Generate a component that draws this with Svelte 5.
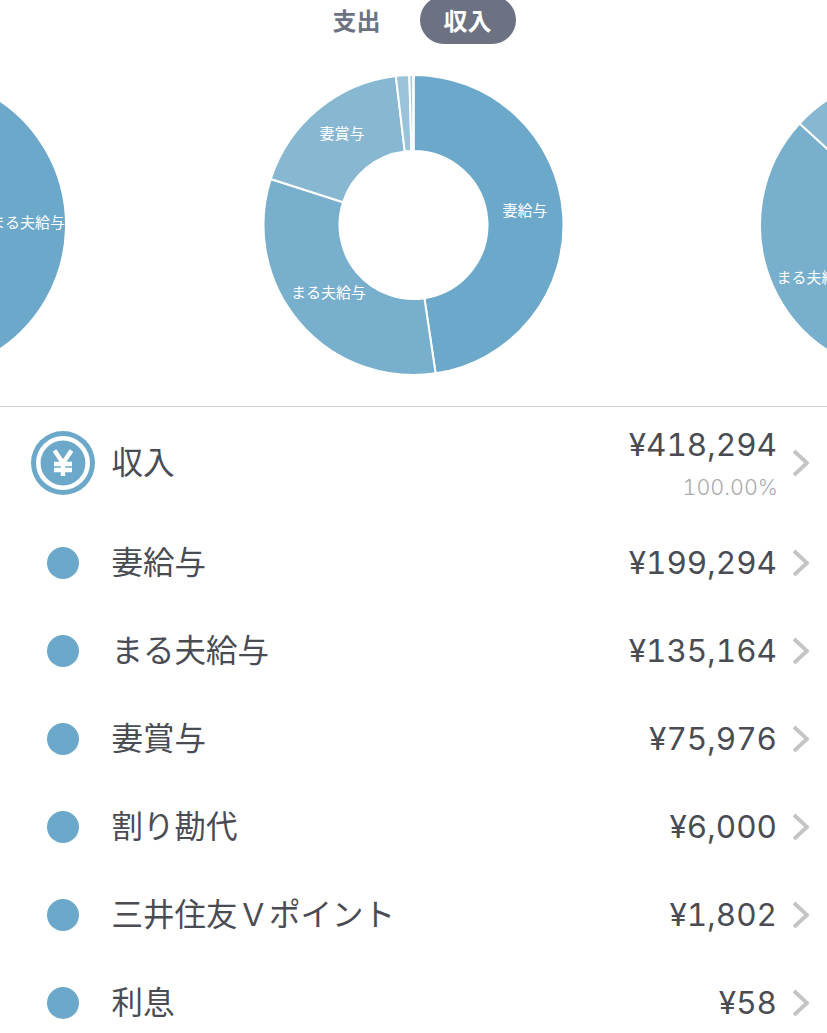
<script>
  const R = 150, r = 74;
  const pt = (cx, cy, rad, deg) => {
    const a = (deg * Math.PI) / 180;
    return [cx + rad * Math.sin(a), cy - rad * Math.cos(a)];
  };
  function arc(cx, cy, from, to) {
    const large = to - from > 180 ? 1 : 0;
    const [a, b] = pt(cx, cy, R, from);
    const [c, d] = pt(cx, cy, R, to);
    const [e, f] = pt(cx, cy, r, to);
    const [g, h] = pt(cx, cy, r, from);
    return `M${a} ${b}A${R} ${R} 0 ${large} 1 ${c} ${d}L${e} ${f}A${r} ${r} 0 ${large} 0 ${g} ${h}Z`;
  }
  const total = 418294;
  const colors = ['#6ba8c9', '#78afcd', '#87b7d1', '#9ac3d9', '#a8cbde', '#b5d3e3'];
  const amounts = [199294, 135164, 75976, 6000, 1802, 58];
  let acc = 0;
  const slices = amounts.map((v, i) => {
    const from = (acc / total) * 360;
    acc += v;
    return { d: arc(413.5, 225, from, (acc / total) * 360), color: colors[i] };
  });
  const rows = [
    { name: '妻給与', amount: '¥199,294' },
    { name: 'まる夫給与', amount: '¥135,164' },
    { name: '妻賞与', amount: '¥75,976' },
    { name: '割り勘代', amount: '¥6,000' },
    { name: '三井住友Ｖポイント', amount: '¥1,802' },
    { name: '利息', amount: '¥58' }
  ];
  const leftMain = arc(-84, 225, 0, 359.99);
  const rightMain = arc(910, 225, 180, 312.6);
  const rightTop = arc(910, 225, 312.6, 359.9);
</script>

<div class="page">
  <div class="tabs">
    <span class="tab">支出</span>
    <span class="tab active">収入</span>
  </div>

  <svg class="charts" width="827" height="362" viewBox="0 44 827 362">
    <g class="slices">
      <path d={leftMain} fill="#6ba8c9" />
      {#each slices as s}
        <path d={s.d} fill={s.color} />
      {/each}
      <path d={rightMain} fill="#78afcd" />
      <path d={rightTop} fill="#87b7d1" />
    </g>
    <text x="65" y="228" text-anchor="end">まる夫給与</text>
    <text x="525" y="216" text-anchor="middle">妻給与</text>
    <text x="342" y="139" text-anchor="middle">妻賞与</text>
    <text x="328.500" y="298" text-anchor="middle">まる夫給与</text>
    <text x="776.500" y="283">まる夫給与</text>
  </svg>

  <div class="list">
    <div class="row head">
      <svg class="coin" width="64" height="64" viewBox="0 0 64 64">
        <circle cx="32" cy="32" r="32" fill="#6ba8c9" />
        <circle cx="32" cy="32" r="24.7" fill="#6ba8c9" stroke="#fff" stroke-width="4.6" />
        <path d="M23.500 19.500 32 32l8.500-12.500M32 32v13M23 33h18M23 39h18" fill="none" stroke="#fff" stroke-width="4.400" />
      </svg>
      <span class="name">収入</span>
      <span class="values head-values">
        <span class="amount">¥418,294</span>
        <span class="pct">100.00%</span>
      </span>
      <svg class="chev" width="17" height="28" viewBox="0 0 17 28"><path d="M2 2l13 12L2 26" fill="none" stroke="#c4c4c6" stroke-width="3.800" /></svg>
    </div>
    {#each rows as row}
      <div class="row">
        <span class="dot-wrap"><span class="dot"></span></span>
        <span class="name">{row.name}</span>
        <span class="values"><span class="amount">{row.amount}</span></span>
        <svg class="chev" width="17" height="28" viewBox="0 0 17 28"><path d="M2 2l13 12L2 26" fill="none" stroke="#c4c4c6" stroke-width="3.800" /></svg>
      </div>
    {/each}
  </div>
</div>

<style>
  :global(body) { margin: 0; background: #fff; }
  .page {
    width: 827px;
    height: 1033px;
    overflow: hidden;
    background: #fff;
    font-family: "Noto Sans CJK JP", "Noto Sans", sans-serif;
    color: #4a4c54;
  }
  .tabs {
    height: 44px;
    display: flex;
    justify-content: center;
    align-items: flex-end;
    gap: 39px;
    overflow: hidden;
    padding-left: 21px;
    box-sizing: border-box;
  }
  .tab {
    height: 48px;
    line-height: 48px;
    flex: none;
    font-size: 24px;
    font-weight: 700;
    color: #6d7283;
  }
  .active {
    width: 96px;
    text-align: center;
    color: #fff;
    background: #6d7283;
    border-radius: 24px;
  }
  .charts { display: block; }
  .slices path { stroke: #fff; stroke-width: 2; }
  .charts text { font-size: 15px; fill: #fff; }
  .list { border-top: 1px solid #cfcfcf; }
  .row {
    height: 88px;
    display: flex;
    align-items: center;
    padding: 0 18px 0 31px;
  }
  .head { height: 112px; }
  .coin { flex: none; }
  .dot-wrap { width: 64px; display: flex; justify-content: center; flex: none; }
  .dot { width: 32px; height: 32px; border-radius: 50%; background: #6ba8c9; }
  .name { margin-left: 16.500px; font-size: 31.500px; flex: 1; padding-bottom: 6px; }
  .values {
    display: flex;
    flex-direction: column;
    align-items: flex-end;
    font-family: Inter, "Noto Sans", sans-serif;
    font-variant-numeric: tabular-nums;
  }
  .head-values { padding-top: 4px; }
  .amount { font-size: 31.500px; line-height: 40px; }
  .pct { font-size: 21.500px; line-height: 38px; color: #a9abb0; font-weight: 300; margin-top: 3px; margin-right: -1px; }
  .chev { margin-left: 15px; flex: none; }
</style>
